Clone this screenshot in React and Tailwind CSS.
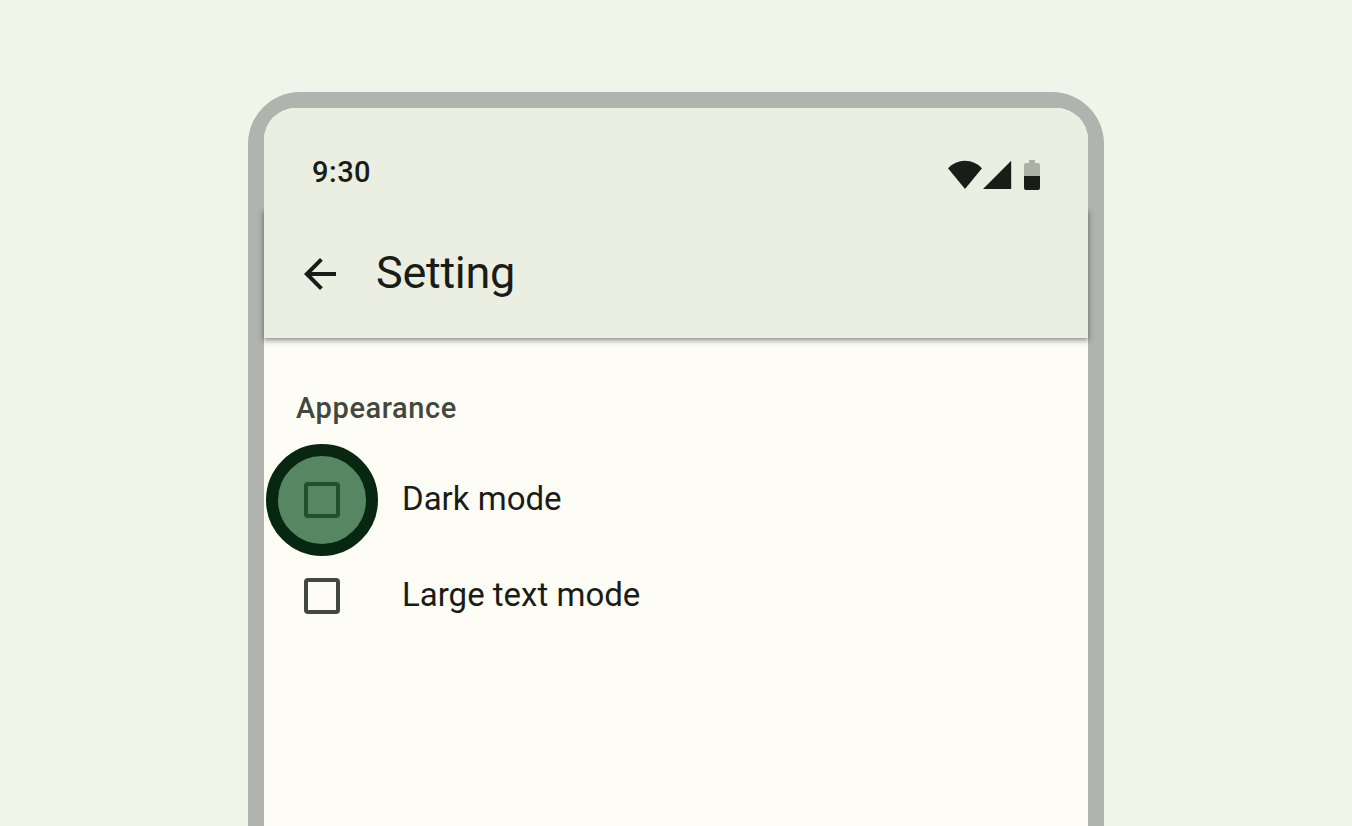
import React from 'react';

function StatusBar() {
  return (
    <div className="relative z-10 flex h-[102px] justify-between rounded-t-[32px] bg-[#ebefe1] pr-12 pl-12">
      <span className="mt-[44px] h-10 font-['Roboto',sans-serif] text-[29px] leading-10 font-medium tracking-[0.5px] text-[#1a1c18]">
        9:30
      </span>
      <svg className="mt-[50px]" width="94" height="34" viewBox="0 0 94 34" fill="#1a1c18">
        <path d="M19 31 L2 10.3 Q9 2.8 19 2.8 Q29 2.8 36 10.3 Z" />
        <path d="M37 31 H65.2 V2.8 Z" />
        <path
          d="M83 2 H89 V5 H92 Q94 5 94 7 V18 H78 V7 Q78 5 80 5 H83 Z"
          fill="#adb1a5"
        />
        <path d="M78 18 H94 V30 Q94 32 92 32 H80 Q78 32 78 30 Z" />
      </svg>
    </div>
  );
}

function AppBar() {
  return (
    <header className="relative flex h-32 items-center bg-[#ebefe1] pl-10 shadow-[0_2px_4px_rgba(0,0,0,0.3),0_2px_6px_2px_rgba(0,0,0,0.15)]">
      <svg width="32" height="32" viewBox="0 0 32 32" fill="#1a1c18">
        <path d="M32 14V18H7.66L18.84 29.18L16 32L0 16L16 0L18.82 2.82L7.66 14H32Z" />
      </svg>
      <h1 className="mb-0.5 ml-10 font-['Roboto',sans-serif] text-[45px] leading-14 tracking-[-0.3px] text-[#1a1c18]">
        Setting
      </h1>
    </header>
  );
}

function SettingRow({ label, pressed }) {
  return (
    <div className="flex h-24 items-center">
      <div className="relative ml-10 size-9 shrink-0 rounded-[4px] border-4 border-[#43483f]">
        {pressed && (
          <div className="absolute -top-[42px] -left-[42px] flex size-28 items-center justify-center rounded-full border-[12px] border-[#072711] bg-[#568662]">
            <div className="size-9 rounded-[4px] border-4 border-[#20502c]" />
          </div>
        )}
      </div>
      <span className="mb-0.5 ml-[62px] font-['Roboto',sans-serif] text-[33px] leading-12 text-[#1a1c18]">
        {label}
      </span>
    </div>
  );
}

export default function App() {
  return (
    <main className="flex h-[826px] w-[1352px] justify-center overflow-hidden bg-[#f0f4e9] pt-[92px]">
      <div className="h-[734px] w-[856px] rounded-t-[52px] bg-[#b1b4ae] px-4 pt-4">
        <div className="h-full rounded-t-[32px] bg-[#fefdf5]">
          <StatusBar />
          <AppBar />
          <section className="pt-[50px]">
            <h2 className="h-10 pl-8 font-['Roboto',sans-serif] text-[29px] leading-10 font-medium tracking-[0.6px] text-[#43483f]">
              Appearance
            </h2>
            <div className="pt-6">
              <SettingRow label="Dark mode" pressed />
              <SettingRow label="Large text mode" />
            </div>
          </section>
        </div>
      </div>
    </main>
  );
}
